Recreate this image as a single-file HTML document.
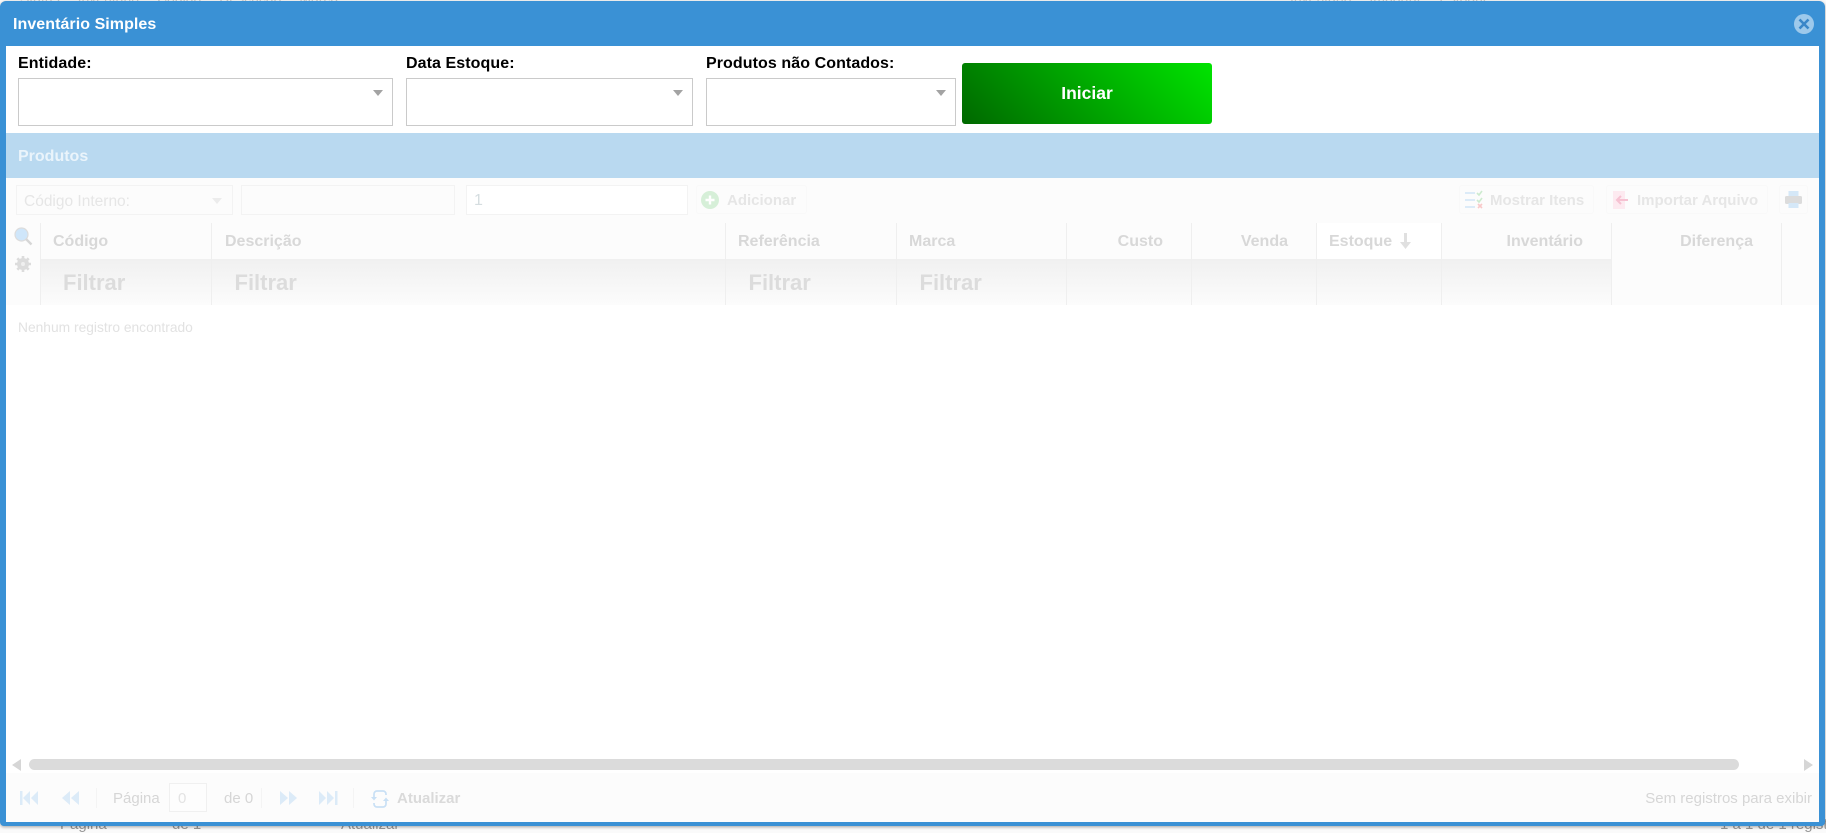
<!DOCTYPE html>
<html lang="pt-BR">
<head>
<meta charset="utf-8">
<title>Inventário Simples</title>
<style>
html,body{margin:0;padding:0;width:1826px;height:829px;overflow:hidden;background:#fafafa;font-family:"Liberation Sans",Arial,sans-serif}
.a{position:absolute;white-space:nowrap}
#win{position:absolute;left:0;top:1px;width:1825px;height:825px;background:#3a91d5;border-radius:6px 6px 4px 4px;box-shadow:0 1px 3px rgba(0,0,0,.35)}
#body{position:absolute;left:6px;top:46px;width:1813px;height:776px;background:#fff;overflow:hidden}
.lbl{font-weight:bold;font-size:16px;color:#000;line-height:18px;letter-spacing:.08px}
.sel{position:absolute;top:78px;height:48px;border:1px solid #cacaca;border-width:1px 1.5px 1.5px 1px;background:#fff;box-sizing:border-box}
.arr{position:absolute;width:0;height:0;border-left:5.5px solid transparent;border-right:5.5px solid transparent;border-top:6px solid #a3a3a3}
.th{font-weight:bold;font-size:16px;color:#d8d8d8;line-height:18px;top:233px}
.fl{font-weight:bold;font-size:22px;color:#dcdcdc;line-height:26px;top:270px}
.sep{position:absolute;width:1px;background:#efefef}
.tb{position:absolute;top:185px;height:29px;border:1px solid #f9f9f9;border-radius:3px;box-sizing:border-box}
.tbt{font-weight:bold;font-size:15px;color:#e6e6e6;line-height:18px;top:192px}
.in{position:absolute;top:185px;height:30px;border:1px solid #f3f3f3;box-sizing:border-box}
</style>
</head>
<body>
<!-- background page peeking out -->
<div class="a" style="left:20px;top:-9px;font-size:14px;color:#ccc;word-spacing:14px;line-height:14px">Status Inventário Código Descrição Marca</div>
<div class="a" style="left:1290px;top:-9px;font-size:14px;color:#ccc;word-spacing:14px;line-height:14px">Inventário Importar Estoque</div>
<div class="a" style="left:60px;top:817px;font-size:15px;color:#999;line-height:16px">Página</div>
<div class="a" style="left:172px;top:817px;font-size:15px;color:#999;line-height:16px">de 1</div>
<div class="a" style="left:341px;top:817px;font-size:15px;color:#999;line-height:16px">Atualizar</div>
<div class="a" style="left:1720px;top:817px;font-size:15px;color:#999;line-height:16px">1 a 1 de 1 registro</div>

<div id="win"></div>
<div class="a" style="left:13px;top:16px;font-weight:bold;font-size:16px;color:#fff;line-height:18px;letter-spacing:.06px">Inventário Simples</div>
<svg class="a" style="left:1794px;top:14px" width="20" height="20" viewBox="0 0 20 20"><circle cx="10" cy="10" r="10" fill="#9dc9eb"/><path d="M5.500 5.500L14.500 14.500M14.500 5.500L5.500 14.500" stroke="#3a86c8" stroke-width="2.600"/></svg>

<div id="body"></div>

<!-- form row -->
<div class="a lbl" style="left:18px;top:55px">Entidade:</div>
<div class="a lbl" style="left:406px;top:55px">Data Estoque:</div>
<div class="a lbl" style="left:706px;top:55px">Produtos não Contados:</div>
<div class="sel" style="left:18px;width:375px"></div>
<div class="sel" style="left:406px;width:287px"></div>
<div class="sel" style="left:706px;width:250px"></div>
<div class="arr" style="left:373px;top:90px"></div>
<div class="arr" style="left:673px;top:90px"></div>
<div class="arr" style="left:936px;top:90px"></div>
<div class="a" style="left:962px;top:63px;width:250px;height:61px;border-radius:3px;background:linear-gradient(45deg,#006800,#00e400);color:#fff;font-weight:bold;font-size:17.500px;text-align:center;line-height:61px">Iniciar</div>

<!-- band -->
<div class="a" style="left:6px;top:133px;width:1813px;height:45px;background:#b9d9f0"></div>
<div class="a" style="left:18px;top:148px;font-weight:bold;font-size:16px;color:#eaf4fb;line-height:18px">Produtos</div>

<!-- toolbar -->
<div class="a" style="left:6px;top:178px;width:1813px;height:45px;background:#fcfcfc"></div>
<div class="in" style="left:16px;width:217px"></div>
<div class="a" style="left:24px;top:193px;font-size:15.500px;color:#e6e6e6;line-height:18px">Código Interno:</div>
<div class="arr" style="left:212px;top:198px;border-top-color:#ececec"></div>
<div class="in" style="left:241px;width:214px"></div>
<div class="in" style="left:466px;width:222px;background:#fff"></div>
<div class="a" style="left:474px;top:192px;font-size:16px;color:#d5dde0;line-height:18px">1</div>

<div class="tb" style="left:696px;width:111px"></div>
<svg class="a" style="left:701px;top:191px" width="18" height="18" viewBox="0 0 18 18"><circle cx="9" cy="9" r="9" fill="#d6efd8"/><path d="M9 4.500v9M4.500 9h9" stroke="#fff" stroke-width="2.400"/></svg>
<div class="a tbt" style="left:727px">Adicionar</div>

<div class="tb" style="left:1459px;width:135px"></div>
<svg class="a" style="left:1465px;top:190px" width="18" height="20" viewBox="0 0 18 20"><path d="M0 3h10M0 10h10M0 17h10" stroke="#dcebf8" stroke-width="2"/><path d="M12 3l2 2 3-4M12 10l2 2 3-4" stroke="#cdebcf" stroke-width="1.600" fill="none"/><path d="M13 14l4 4M17 14l-4 4" stroke="#f8c9c9" stroke-width="1.600"/></svg>
<div class="a tbt" style="left:1490px">Mostrar Itens</div>

<div class="tb" style="left:1606px;width:162px"></div>
<div class="a" style="left:1613px;top:191px;width:12px;height:18px;background:#fdeaf0"></div>
<svg class="a" style="left:1615px;top:194px" width="14" height="12" viewBox="0 0 14 12"><path d="M13 6H2M6 2L2 6l4 4" stroke="#f6c2d2" stroke-width="2" fill="none"/></svg>
<div class="a tbt" style="left:1637px">Importar Arquivo</div>

<div class="tb" style="left:1779px;width:29px"></div>
<svg class="a" style="left:1785px;top:191px" width="17" height="18" viewBox="0 0 17 18"><rect x="3.500" y="0" width="10" height="5" fill="#d5e8f8"/><rect x="0" y="5" width="17" height="8" rx="1.500" fill="#dcdcdc"/><rect x="3.500" y="12" width="10" height="5" fill="#d5e8f8"/></svg>

<!-- table -->
<div class="a" style="left:6px;top:223px;width:1813px;height:82px;background:#fcfcfc"></div>
<div class="a" style="left:40px;top:259px;width:1571px;height:46px;background:linear-gradient(#f0f0f0,#fcfcfc)"></div>
<div class="a" style="left:1316px;top:223px;width:125px;height:36px;background:#fff"></div>
<div class="sep" style="left:40px;top:223px;height:82px"></div>
<div class="sep" style="left:211px;top:223px;height:82px"></div>
<div class="sep" style="left:725px;top:223px;height:82px"></div>
<div class="sep" style="left:896px;top:223px;height:82px"></div>
<div class="sep" style="left:1066px;top:223px;height:82px"></div>
<div class="sep" style="left:1191px;top:223px;height:82px"></div>
<div class="sep" style="left:1316px;top:223px;height:82px"></div>
<div class="sep" style="left:1441px;top:223px;height:82px"></div>
<div class="sep" style="left:1611px;top:223px;height:82px"></div>
<div class="sep" style="left:1781px;top:223px;height:82px"></div>

<!-- left icons -->
<svg class="a" style="left:14px;top:227px" width="19" height="19" viewBox="0 0 19 19"><circle cx="7.500" cy="7.500" r="6.500" fill="#cfe6fa" stroke="#dcdcdc" stroke-width="1.200"/><path d="M12 12l5.500 5.500" stroke="#d6d6d6" stroke-width="2.400"/></svg>
<svg class="a" style="left:15px;top:256px" width="16" height="16" viewBox="0 0 16 16"><circle cx="8" cy="8" r="6" fill="#dcdcdc"/><path d="M8 0v16M0 8h16M2.300 2.300l11.400 11.400M13.700 2.300L2.300 13.700" stroke="#dcdcdc" stroke-width="2.600"/><circle cx="8" cy="8" r="2" fill="#efefef"/></svg>

<div class="a th" style="left:53px">Código</div>
<div class="a th" style="left:225px">Descrição</div>
<div class="a th" style="left:738px">Referência</div>
<div class="a th" style="left:909px">Marca</div>
<div class="a th" style="right:663px">Custo</div>
<div class="a th" style="right:538px">Venda</div>
<div class="a th" style="left:1329px">Estoque</div>
<svg class="a" style="left:1399px;top:233px" width="13" height="17" viewBox="0 0 13 17"><path d="M6.500 0v13" stroke="#e0e0e0" stroke-width="3" fill="none"/><path d="M1 9h11l-5.500 7z" fill="#e0e0e0"/></svg>
<div class="a th" style="right:243px">Inventário</div>
<div class="a th" style="right:73px">Diferença</div>

<div class="a fl" style="left:63px">Filtrar</div>
<div class="a fl" style="left:234.500px">Filtrar</div>
<div class="a fl" style="left:748.500px">Filtrar</div>
<div class="a fl" style="left:919.500px">Filtrar</div>

<div class="a" style="left:18px;top:320px;font-size:13.800px;color:#e2e2e2;line-height:16px">Nenhum registro encontrado</div>

<!-- scrollbar -->
<div class="a" style="left:29px;top:759px;width:1710px;height:11px;border-radius:6px;background:#dbdbdb"></div>
<div class="a" style="left:12px;top:759px;width:0;height:0;border-top:6px solid transparent;border-bottom:6px solid transparent;border-right:9px solid #d6d6d6"></div>
<div class="a" style="left:1804px;top:759px;width:0;height:0;border-top:6px solid transparent;border-bottom:6px solid transparent;border-left:9px solid #d6d6d6"></div>

<!-- footer -->
<div class="a" style="left:6px;top:773px;width:1813px;height:49px;background:#fcfcfc"></div>
<svg class="a" style="left:20px;top:791px" width="19" height="14" viewBox="0 0 19 14"><path d="M0 0h2.500v14H0zM10 0v14L3 7zM18 0v14L11 7z" fill="#dcebf8"/></svg>
<svg class="a" style="left:62px;top:791px" width="17" height="14" viewBox="0 0 17 14"><path d="M8 0v14L0 7zM17 0v14L9 7z" fill="#dcebf8"/></svg>
<div class="sep" style="left:96px;top:788px;height:20px;background:#f4f4f4"></div>
<div class="a" style="left:113px;top:790px;font-size:15px;color:#d6d6d6;line-height:18px">Página</div>
<div class="a" style="left:169px;top:783px;width:38px;height:29px;border:1px solid #f0f0f0;box-sizing:border-box;background:#fdfdfd"></div>
<div class="a" style="left:178px;top:790px;font-size:15px;color:#e3e3e3;line-height:18px">0</div>
<div class="a" style="left:224px;top:790px;font-size:15px;color:#d6d6d6;line-height:18px">de 0</div>
<div class="sep" style="left:261px;top:788px;height:20px;background:#f4f4f4"></div>
<svg class="a" style="left:280px;top:791px" width="17" height="14" viewBox="0 0 17 14"><path d="M0 0v14L8 7zM9 0v14L17 7z" fill="#dcebf8"/></svg>
<svg class="a" style="left:319px;top:791px" width="19" height="14" viewBox="0 0 19 14"><path d="M0 0v14L7 7zM8 0v14L15 7zM16 0h2.500v14H16z" fill="#dcebf8"/></svg>
<div class="sep" style="left:353px;top:788px;height:20px;background:#f4f4f4"></div>
<svg class="a" style="left:371px;top:789px" width="18" height="20" viewBox="0 0 18 20"><path d="M3 8V5a3 3 0 0 1 3-3h6a3 3 0 0 1 3 3v1M15 12v3a3 3 0 0 1-3 3H6a3 3 0 0 1-3-3v-1" stroke="#c9e0f5" stroke-width="1.700" fill="none"/><path d="M0 8h6l-3 3.500zM12 12h6l-3-3.500z" fill="#c9e0f5"/></svg>
<div class="a" style="left:397px;top:790px;font-weight:bold;font-size:15px;color:#dadada;line-height:18px">Atualizar</div>
<div class="a" style="right:14px;top:790px;font-size:15px;color:#d6d6d6;line-height:18px">Sem registros para exibir</div>
</body>
</html>
